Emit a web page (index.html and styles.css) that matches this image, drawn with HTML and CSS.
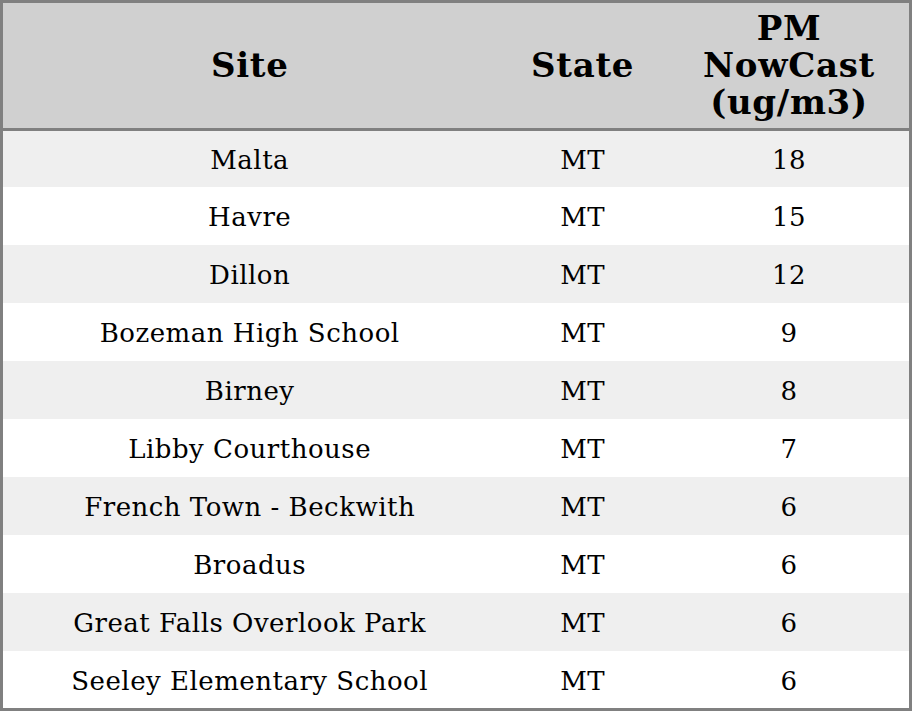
FILE: index.html
```html
<!DOCTYPE html>
<html>
<head>
<meta charset="utf-8">
<link rel="stylesheet" href="styles.css">
</head>
<body>
<table class="aq-table">
  <colgroup>
    <col class="col-site">
    <col class="col-state">
    <col class="col-pm">
  </colgroup>
  <thead>
    <tr>
      <th>Site</th>
      <th>State</th>
      <th>PM<br>NowCast<br>(ug/m3)</th>
    </tr>
  </thead>
  <tbody>
    <tr><td>Malta</td><td>MT</td><td>18</td></tr>
    <tr><td>Havre</td><td>MT</td><td>15</td></tr>
    <tr><td>Dillon</td><td>MT</td><td>12</td></tr>
    <tr><td>Bozeman High School</td><td>MT</td><td>9</td></tr>
    <tr><td>Birney</td><td>MT</td><td>8</td></tr>
    <tr><td>Libby Courthouse</td><td>MT</td><td>7</td></tr>
    <tr><td>French Town - Beckwith</td><td>MT</td><td>6</td></tr>
    <tr><td>Broadus</td><td>MT</td><td>6</td></tr>
    <tr><td>Great Falls Overlook Park</td><td>MT</td><td>6</td></tr>
    <tr><td>Seeley Elementary School</td><td>MT</td><td>6</td></tr>
  </tbody>
</table>
</body>
</html>
```
FILE: styles.css
```css
html, body {
  margin: 0;
  padding: 0;
  background: #ffffff;
}
.aq-table {
  width: 912px;
  border-collapse: collapse;
  border: 3px solid #808080;
  font-family: "DejaVu Serif", serif;
  color: #000;
}
.col-site { width: 497px; }
.col-state { width: 173px; }
.col-pm { width: 242px; }
.aq-table th {
  background: #d0d0d0;
  font-size: 34px;
  font-weight: bold;
  letter-spacing: 0.7px;
  line-height: 37px;
  height: 125px;
  padding: 0;
  text-align: center;
  vertical-align: middle;
  border-bottom: 3px solid #808080;
}
.aq-table td {
  font-size: 26px;
  letter-spacing: 0.5px;
  line-height: 30px;
  height: 56px;
  padding: 2px 0 0 0;
  text-align: center;
  vertical-align: middle;
}
.aq-table tbody tr:first-child td { height: 54px; }
.aq-table tbody tr:last-child td { height: 55px; }
.aq-table tbody tr:nth-child(odd) {
  background: #efefef;
}
```
